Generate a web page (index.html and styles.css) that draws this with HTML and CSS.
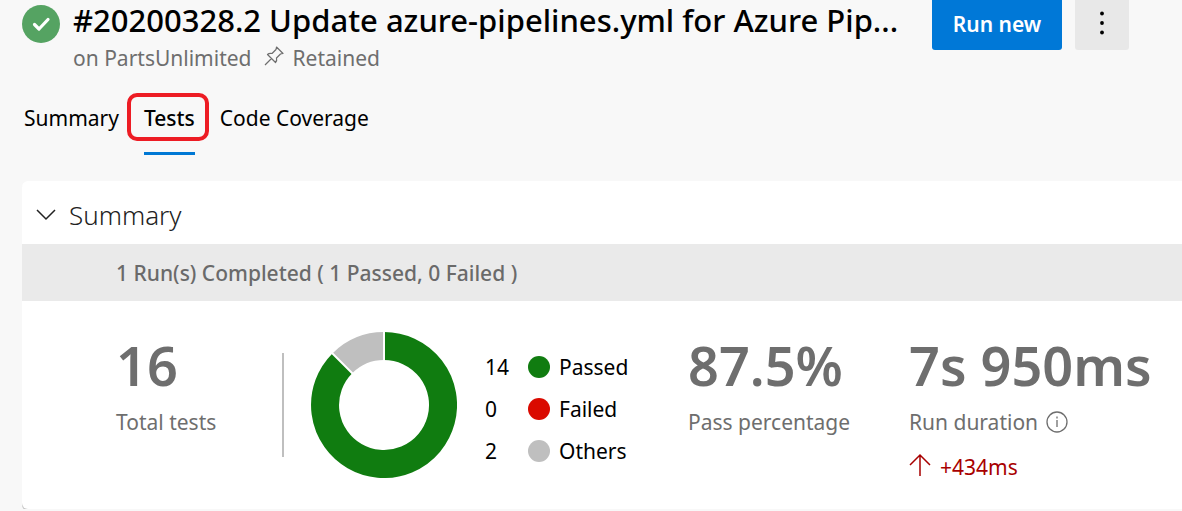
FILE: index.html
```html
<!DOCTYPE html>
<html lang="en">
<head>
<meta charset="utf-8">
<title>Pipeline run - Tests</title>
<meta name="viewport" content="width=device-width, initial-scale=1">
<link rel="stylesheet" href="styles.css">
</head>
<body>
<header class="run-header">
  <svg class="status" viewBox="0 0 38 38" role="img" aria-label="Succeeded"><circle cx="19" cy="19" r="19" fill="#55a362"/><path d="M12.500 19.500l4.500 4.500 9-9.500" fill="none" stroke="#fff" stroke-width="3.200" stroke-linecap="round" stroke-linejoin="round"/></svg>
  <div class="run-info">
    <h1 class="run-title">#20200328.2 Update azure-pipelines.yml for Azure Pip...</h1>
    <p class="run-meta"><span>on PartsUnlimited</span>
      <svg class="pin" viewBox="0 0 20 20" aria-hidden="true"><path d="M1 19l6.500-6.500M12.500 1l6.500 6.500-2.500.5-4 4c.5 2 0 3.500-1 4.500l-8-8c1-1 2.500-1.500 4.500-1l4-4z" fill="none" stroke="currentColor" stroke-width="1.200" stroke-linejoin="round"/></svg>
      <span>Retained</span></p>
  </div>
  <div class="actions">
    <button class="btn primary" type="button">Run new</button>
    <button class="btn more" type="button" aria-label="More actions"><svg class="dots" viewBox="0 0 4 24" aria-hidden="true"><circle cx="2" cy="2.500" r="1.900"/><circle cx="2" cy="12" r="1.900"/><circle cx="2" cy="21.500" r="1.900"/></svg></button>
  </div>
</header>
<nav class="tabs" aria-label="Run views">
  <a class="tab" href="#summary">Summary</a>
  <a class="tab active" href="#tests" aria-current="page">Tests</a>
  <a class="tab" href="#coverage">Code Coverage</a>
</nav>
<main class="card">
  <h2 class="card-heading"><button class="toggle" type="button" aria-expanded="true"><svg class="chevron" viewBox="0 0 20 12" aria-hidden="true"><path d="M1 1l9 9 9-9" fill="none" stroke="currentColor" stroke-width="1.500"/></svg>Summary</button></h2>
  <p class="band">1 Run(s) Completed ( 1 Passed, 0 Failed )</p>
  <div class="metrics">
    <section class="metric total">
      <strong class="value">16</strong>
      <span class="label">Total tests</span>
    </section>
    <section class="outcome">
      <svg class="donut" viewBox="-73 -73 146 146" role="img" aria-label="14 passed, 0 failed, 2 others">
        <path d="M0-59A59 59 0 1 1-41.700-41.700" fill="none" stroke="#107c10" stroke-width="28"/>
        <path d="M-41.700-41.700A59 59 0 0 1 0-59" fill="none" stroke="#bfbfbf" stroke-width="28"/>
        <path d="M0-74V-42M-53-53L-29-29" stroke="#fff" stroke-width="2"/>
      </svg>
      <ul class="legend">
        <li><span class="count">14</span><i class="dot passed"></i>Passed</li>
        <li><span class="count">0</span><i class="dot failed"></i>Failed</li>
        <li><span class="count">2</span><i class="dot others"></i>Others</li>
      </ul>
    </section>
    <section class="metric rate">
      <strong class="value">87.5%</strong>
      <span class="label">Pass percentage</span>
    </section>
    <section class="metric">
      <strong class="value">7s 950ms</strong>
      <span class="label">Run duration
        <svg class="info" viewBox="0 0 22 22" aria-hidden="true"><circle cx="11" cy="11" r="10" fill="none" stroke="currentColor" stroke-width="1.300"/><path d="M11 9v7M11 5.500v2" stroke="currentColor" stroke-width="1.300"/></svg></span>
      <span class="delta"><svg class="arrow" viewBox="0 0 22 24" aria-hidden="true"><path d="M11 23V2M1 12L11 2l10 10" fill="none" stroke="currentColor" stroke-width="1.500"/></svg>+434ms</span>
    </section>
  </div>
</main>
</body>
</html>
```
FILE: styles.css
```css
* { box-sizing: border-box; }
body {
  margin: 0;
  background: #f8f8f8;
  color: #000;
  font: 21px/28px "Segoe UI", "Noto Sans", sans-serif;
}
h1, h2, p, ul { margin: 0; padding: 0; }
button { font: inherit; border: 0; cursor: pointer; }
svg { flex: none; }

.run-header { display: flex; align-items: flex-start; padding: 0 53px 0 22px; }
.status { width: 38px; height: 38px; margin-top: 5px; }
.run-info { flex: 1; min-width: 0; margin-left: 13px; }
.run-title {
  font-size: 31px;
  line-height: 40px;
  font-weight: 500;
  white-space: nowrap;
}
.run-meta { display: flex; align-items: center; margin-top: 4px; color: #6e6e6e; }
.pin { width: 20px; height: 20px; margin: 0 9px 4px 12px; }
.actions { display: flex; gap: 13px; margin-left: 24px; }
.btn { height: 50px; border-radius: 0 0 3px 3px; }
.primary { width: 130px; padding: 0 0 2px; background: #0078d7; color: #fff; font-weight: 600; }
.more { width: 54px; background: #e8e8e8; }
.dots { width: 4px; height: 24px; display: block; margin: 0 auto 4px; }

.tabs { display: flex; gap: 25px; padding: 32px 24px 0; }
.tab { position: relative; padding-bottom: 20px; border-bottom: 3px solid transparent; color: #000; text-decoration: none; }
.tab.active { font-weight: 500; border-color: #0078d4; }
.tab.active::after {
  content: "";
  position: absolute;
  inset: -11px -14px 11px -17px;
  border: 4px solid #ed1c24;
  border-radius: 10px;
}

.card {
  margin: 26px 0 0 22px;
  background: #fff;
  border-radius: 6px 0 0 6px;
  box-shadow: 0 2px 0 #c8c8c8;
}
.card-heading { padding: 18px 14px 13px; font-size: 26px; line-height: 32px; font-weight: 300; }
.toggle { display: flex; align-items: center; gap: 13px; padding: 0; background: none; color: #222; }
.chevron { width: 20px; height: 12px; }
.band { padding: 15px 94px 14px; background: #eaeaea; color: #6a6a6a; font-weight: 500; }
.metrics { display: flex; padding: 31px 0 28px 94px; }
.metric { display: flex; flex-direction: column; color: #6e6e6e; white-space: nowrap; }
.value { font-size: 54px; line-height: 66px; font-weight: 600; }
.label { display: flex; align-items: center; gap: 8px; margin-top: 10px; }
.total { width: 168px; height: 104px; margin-top: 21px; border-right: 2px solid #bfbfbf; }
.total .value { margin-top: -21px; }
.outcome { display: flex; width: 404px; padding-left: 27px; }
.donut { width: 146px; height: 146px; }
.legend { display: grid; gap: 14px; align-content: start; margin: 21px 0 0 28px; list-style: none; }
.legend li { display: flex; align-items: center; }
.count { width: 43px; }
.dot { width: 22px; height: 22px; margin-right: 9px; border-radius: 50%; }
.passed { background: #107c10; }
.failed { background: #da0a00; }
.others { background: #bfbfbf; }
.rate { width: 221px; }
.info { width: 22px; height: 22px; }
.delta { display: flex; align-items: center; gap: 9px; margin-top: 17px; color: #a80000; }
.arrow { width: 22px; height: 24px; margin-bottom: 4px; }
```
